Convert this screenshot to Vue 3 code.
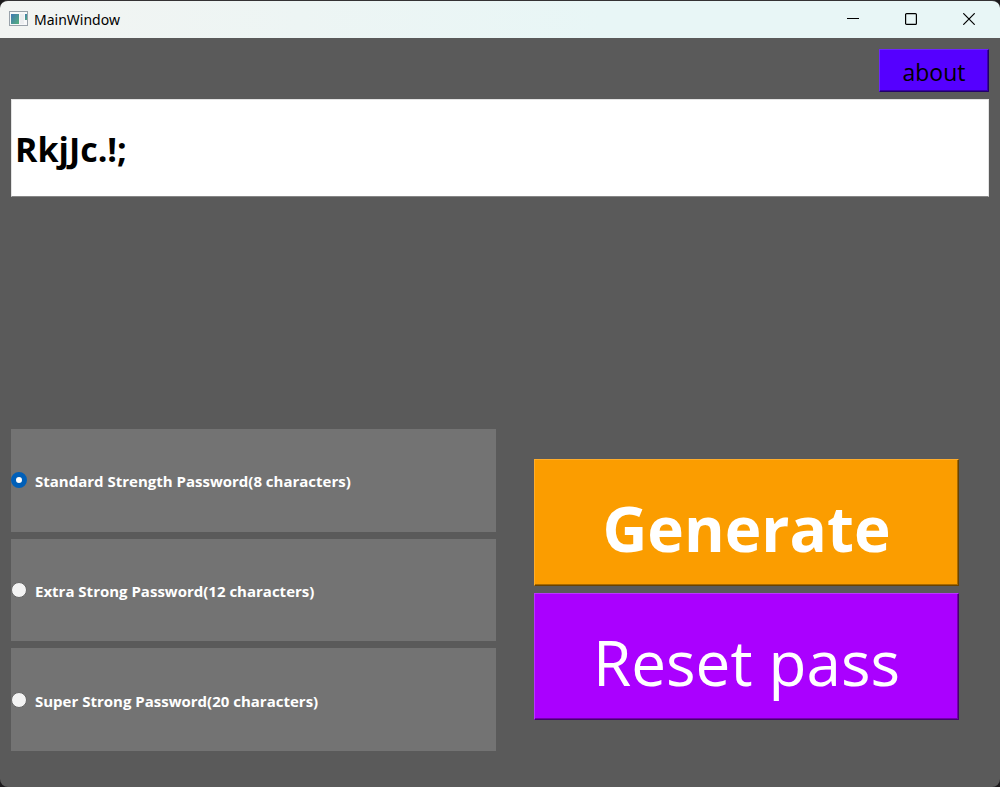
<script setup>
import { ref } from 'vue'

const options = [
  { id: 'standard', name: 'Standard Strength Password', length: 8 },
  { id: 'extra', name: 'Extra Strong Password', length: 12 },
  { id: 'super', name: 'Super Strong Password', length: 20 },
]
const selected = ref('standard')
const password = ref('RkjJc.!;')

const alphabet = 'ABCDEFGHIJKLMNOPQRSTUVWXYZabcdefghijklmnopqrstuvwxyz0123456789.,;!?'

function generate() {
  const { length } = options.find((o) => o.id === selected.value)
  password.value = Array.from(
    { length },
    () => alphabet[Math.floor(Math.random() * alphabet.length)],
  ).join('')
}

function reset() {
  password.value = ''
}
</script>

<template>
  <div class="window">
    <header class="titlebar">
      <svg class="app-icon" width="20" height="16" viewBox="0 0 20 16" aria-hidden="true">
        <defs>
          <linearGradient id="pane" x1="0" y1="0" x2="1" y2="1">
            <stop offset="0" stop-color="#3f78b4" />
            <stop offset="1" stop-color="#55b07c" />
          </linearGradient>
        </defs>
        <rect x="0.5" y="0.5" width="18" height="14" fill="#f7f8f9" stroke="#99a2aa" />
        <rect x="2" y="3" width="8" height="10" fill="url(#pane)" />
        <rect x="11" y="3" width="4" height="10" fill="#eceef0" />
        <rect x="16" y="3" width="2" height="6" fill="url(#pane)" />
      </svg>
      <span class="title">MainWindow</span>
      <div class="controls">
        <button type="button" aria-label="Minimize">
          <svg width="12" height="12" viewBox="0 0 12 12"><path d="M0 5.5H12" /></svg>
        </button>
        <button type="button" aria-label="Maximize">
          <svg width="12" height="12" viewBox="0 0 12 12">
            <rect x="0.6" y="0.6" width="10.8" height="10.8" rx="1" />
          </svg>
        </button>
        <button type="button" aria-label="Close">
          <svg width="12" height="12" viewBox="0 0 12 12"><path d="M0.3 0.3L11.7 11.7M11.7 0.3L0.3 11.7" /></svg>
        </button>
      </div>
    </header>

    <main class="content">
      <button type="button" class="push about">about</button>
      <input v-model="password" class="password" type="text" aria-label="Password" spellcheck="false" />

      <div class="panel">
        <div class="options" role="radiogroup" aria-label="Password strength">
          <label v-for="o in options" :key="o.id" class="option" :for="o.id">
            <input :id="o.id" v-model="selected" type="radio" name="strength" :value="o.id" />
            <span>{{ o.name }}({{ o.length }} characters)</span>
          </label>
        </div>
        <div class="actions">
          <button type="button" class="push generate" @click="generate">Generate</button>
          <button type="button" class="push reset" @click="reset">Reset pass</button>
        </div>
      </div>
    </main>
  </div>
</template>

<style>
body {
  background: #1c1a1c;
}
</style>

<style scoped>
.window,
.window * {
  box-sizing: border-box;
}

.window {
  display: flex;
  flex-direction: column;
  min-height: 100vh;
  overflow: hidden;
  border-top: 1px solid #343234;
  border-radius: 8px;
  background: #5a5a5a;
  font-family: "Open Sans", "Noto Sans", sans-serif;
}

button,
input {
  margin: 0;
  font-family: inherit;
}

.titlebar {
  display: flex;
  align-items: center;
  height: 37px;
  padding-left: 9px;
  background: linear-gradient(90deg, #f2f4f2, #e8f6f6 60%);
}

.app-icon {
  margin-bottom: 2px;
}

.title {
  margin-left: 5px;
  font-family: "Noto Sans", "Open Sans", sans-serif;
  font-size: 14px;
  line-height: 20px;
  color: #000;
}

.controls {
  display: flex;
  align-self: stretch;
  margin-left: auto;
  padding: 0 2px 2px 0;
}

.controls button {
  display: flex;
  align-items: center;
  justify-content: center;
  width: 58px;
  padding: 0;
  border: 0;
  background: none;
}

.controls svg {
  fill: none;
  stroke: #000;
  stroke-width: 1.2;
}

.content {
  display: flex;
  flex: 1;
  flex-direction: column;
  padding: 11px 11px 36px;
}

.push {
  border: 1px solid;
}

.about {
  align-self: flex-end;
  width: 110px;
  height: 43px;
  padding: 2px 0 0;
  border-color: #6c24ff #22006a #22006a #6c24ff;
  background: #5500ff;
  box-shadow: inset -1px -1px #3900aa;
  font-size: 23px;
  line-height: 32px;
  color: #000;
}

.password {
  width: 100%;
  height: 98px;
  margin-top: 7px;
  padding: 2px 3px 0;
  border: 1px solid #e3e3e3;
  border-bottom-color: #868686;
  outline: 0;
  background: #fff;
  font-size: 34px;
  font-weight: 700;
  color: #000;
}

.panel {
  display: grid;
  grid-template-columns: 97fr 85fr;
  column-gap: 38px;
  margin-top: auto;
  padding-right: 30px;
}

.options {
  display: grid;
  grid-auto-rows: 1fr;
  gap: 7px;
  min-height: 322px;
}

.option {
  display: flex;
  align-items: center;
  gap: 8px;
  background: #737373;
  font-size: 15px;
  font-weight: 700;
  line-height: 20px;
  color: #fff;
}

.option input {
  flex: none;
  width: 16px;
  height: 16px;
  appearance: none;
  border: 1px solid #666;
  border-radius: 50%;
  background: #f3f3f3;
}

.option input:checked {
  border: 5px solid #005fb8;
  background: #fff;
}

.option span {
  padding-top: 2px;
}

.actions {
  display: grid;
  grid-auto-rows: 1fr;
  gap: 7px;
  padding: 30px 0 31px;
}

.generate,
.reset {
  padding: 10px 0 0;
  font-size: 62px;
  line-height: 80px;
  color: #fff;
}

.generate {
  border-color: #ffad2b #694200 #694200 #ffad2b;
  background: #fb9d00;
  box-shadow: inset -1px -1px #a76900;
  font-weight: 700;
}

.reset {
  border-color: #b935ff #480070 #480070 #b935ff;
  background: #aa00ff;
  box-shadow: inset -1px -1px #7200aa;
  font-weight: 400;
}
</style>
